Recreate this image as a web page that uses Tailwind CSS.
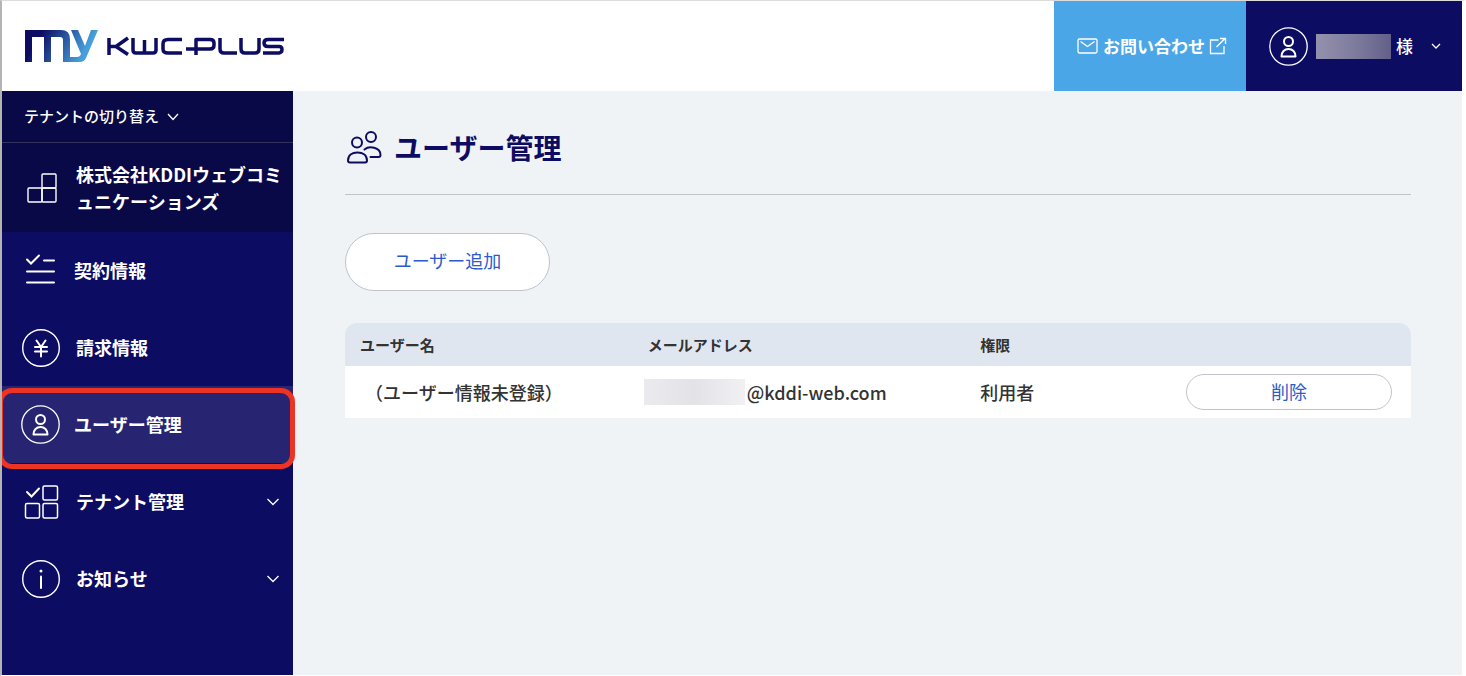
<!DOCTYPE html>
<html lang="ja">
<head>
    <meta charset="UTF-8">
    <meta name="viewport" content="width=device-width, initial-scale=1.0">
    <title>ユーザー管理 | MY KWC-PLUS</title>
    <script src="https://cdn.jsdelivr.net/npm/@tailwindcss/browser@4"></script>
</head>
<body class="min-h-screen flex flex-col bg-[#eff3f6] border-t border-l-2 border-r-4 border-b border-t-[#dcdcdc] border-l-[#b4b4b4] border-r-white border-b-white font-['Noto_Sans_CJK_JP',sans-serif] text-[#333]">
    <header class="flex h-[90px] bg-white">
        <a href="#" class="flex items-center gap-2 pl-[22px]" aria-label="MY KWC-PLUS">
            <svg class="w-[74px] h-[34px]" viewBox="0 0 74 34" fill="none">
                <defs>
                    <linearGradient id="logoGradient" x1="4" y1="0" x2="62" y2="34" gradientUnits="userSpaceOnUse">
                        <stop offset="0.2" stop-color="#0d0c63"/>
                        <stop offset="0.9" stop-color="#46a0dc"/>
                    </linearGradient>
                </defs>
                <path fill="url(#logoGradient)" d="M1 1H37Q46 1 46 10V33H39V11Q39 8 36 8H27V33H20V8H8V33H1ZM47 1H54L61 17L67 1H74L62 29Q60 33 56 33H40V28H53Q56 28 57 25Z"/>
            </svg>
            <svg class="w-[180px] h-[20px]" viewBox="0 0 180 20" fill="none" stroke="#0d0c63" stroke-width="3.500" stroke-linejoin="round">
                <path d="M3 2V19M4 10.500H10L22 2M10 10.500L22 18.500"/>
                <path d="M27 2V14Q27 17 30 17H47Q50 17 50 14V2M38.500 4V17"/>
                <path d="M76 3.500H62Q57 3.500 57 8V13Q57 17 62 17H76"/>
                <path d="M80 13H104Q108 13 108 9V7Q108 3.500 104 3.500H90V19"/>
                <path d="M114 2V13Q114 17 118 17H131"/>
                <path d="M135 2V13Q135 17 139 17H149Q153 17 153 13V2"/>
                <path d="M178 3.500H162Q158 3.500 158 7T162 10.500H173Q176 10.500 176 13.500T173 17H157"/>
            </svg>
        </a>
        <a href="#" class="ml-auto w-48 flex items-center justify-center gap-1 pl-1 bg-[#4ba6e8] text-white text-[17px] font-bold">
            <svg class="w-[22px] h-[18px]" viewBox="0 0 22 18" fill="none" stroke="currentColor" stroke-width="1.300"><rect x="1" y="2" width="19" height="14" rx="1.500"/><path d="M3.500 4.500L10.500 9.500L17.500 4.500"/></svg>
            お問い合わせ
            <svg class="w-[18px] h-[18px]" viewBox="0 0 18 18" fill="none" stroke="currentColor" stroke-width="1.300"><path d="M9.500 3H1.500V16.500H15V9M7.500 10L16 1.500M11 1.500H16.500V7"/></svg>
        </a>
        <button type="button" class="w-[216px] flex items-center pl-[23px] bg-[#0d0c63] text-white text-[17px] font-medium">
            <svg class="w-[39px] h-[39px]" viewBox="0 0 39 39" fill="none" stroke="currentColor"><circle cx="19.500" cy="19.500" r="18.700" stroke-width="1.300"/><g stroke-width="2" stroke-linejoin="round"><circle cx="19.500" cy="14.500" r="4.500"/><path d="M12.500 29.500C12.500 25 15.500 22 19.500 22S26.500 25 26.500 29.500Z"/></g></svg>
            <span class="ml-2 mr-[5px] w-[75px] h-[25px] bg-linear-to-r from-[#9391ac] via-[#7f7d9e] to-[#626089]"></span>
            様
            <svg class="ml-[18px] w-[10px] h-[6px]" viewBox="0 0 10 6" fill="none" stroke="currentColor" stroke-width="1.300"><path d="M1 1L5 5L9 1"/></svg>
        </button>
    </header>

    <div class="flex flex-1">
        <aside class="w-[291px] shrink-0 bg-[#0d0c63] text-white">
            <div class="bg-[#0a0948]">
                <button type="button" class="w-full h-[52px] flex items-center gap-2 px-[22px] text-[15px] font-medium border-b border-[#33325f]">
                    テナントの切り替え
                    <svg class="w-3 h-2" viewBox="0 0 12 8" fill="none" stroke="currentColor" stroke-width="1.300"><path d="M1 1L6 6.500L11 1"/></svg>
                </button>
                <div class="h-[89px] flex items-center gap-4 pl-5 pr-2">
                    <svg class="w-[38px] h-[38px] shrink-0" viewBox="0 0 38 38" fill="none" stroke="currentColor" stroke-width="1.400"><rect x="6" y="19" width="14" height="14" rx="1"/><rect x="20" y="19" width="14" height="14" rx="1"/><rect x="20" y="5" width="14" height="14" rx="1"/></svg>
                    <p class="text-[18px] leading-[27px] font-bold break-all">株式会社KDDIウェブコミュニケーションズ</p>
                </div>
            </div>
            <nav class="text-[18px] font-bold">
                <a href="#" class="h-[77px] flex items-center gap-[14px] pl-5">
                    <svg class="w-[38px] h-[38px]" viewBox="0 0 38 38" fill="none" stroke="currentColor" stroke-width="2" stroke-linecap="round"><path d="M5 7.500L9 11.500L17 3.500M22 8.500H32M5 19.500H32M5 30.500H32"/></svg>
                    契約情報
                </a>
                <a href="#" class="h-[77px] flex items-center gap-4 pl-5">
                    <svg class="w-[38px] h-[38px]" viewBox="0 0 38 38" fill="none" stroke="currentColor"><circle cx="19" cy="19" r="18.300" stroke-width="1.400"/><path d="M14.500 11.500L19 18L23.500 11.500M19 18V27.500M13 18H25M13 22.500H25" stroke-width="2" stroke-linecap="round"/></svg>
                    請求情報
                </a>
                <a href="#" aria-current="page" class="relative h-[77px] flex items-center gap-[14px] pl-[19px] bg-[#272572]">
                    <svg class="w-[39px] h-[39px]" viewBox="0 0 39 39" fill="none" stroke="currentColor"><circle cx="19.500" cy="19.500" r="18.700" stroke-width="1.300"/><g stroke-width="2" stroke-linejoin="round"><circle cx="19.500" cy="14.500" r="4.500"/><path d="M12.500 29.500C12.500 25 15.500 22 19.500 22S26.500 25 26.500 29.500Z"/></g></svg>
                    ユーザー管理
                    <span class="absolute -left-1 -right-0.5 top-0.5 -bottom-1.5 border-5 border-[#ed3424] rounded-[14px]"></span>
                </a>
                <a href="#" class="h-[77px] flex items-center gap-4 pl-5 pr-[14px]">
                    <svg class="w-[38px] h-[38px]" viewBox="0 0 38 38" fill="none" stroke="currentColor" stroke-width="1.500"><rect x="21" y="3" width="14.500" height="14" rx="1.500"/><rect x="3.500" y="20.500" width="14" height="14.500" rx="1.500"/><rect x="21" y="20.500" width="14.500" height="14.500" rx="1.500"/><path d="M5 9L9.500 13.500L17 5.500" stroke-width="2" stroke-linecap="round"/></svg>
                    テナント管理
                    <svg class="ml-auto w-3 h-2" viewBox="0 0 12 8" fill="none" stroke="currentColor" stroke-width="1.300"><path d="M0.500 1L6 6.500L11.500 1"/></svg>
                </a>
                <a href="#" class="h-[77px] flex items-center gap-4 pl-5 pr-[14px]">
                    <svg class="w-[38px] h-[38px]" viewBox="0 0 38 38" fill="none" stroke="currentColor"><circle cx="19" cy="19" r="18.300" stroke-width="1.400"/><path d="M19 16.500V28" stroke-width="2" stroke-linecap="round"/><circle cx="19" cy="11" r="1.500" fill="currentColor" stroke="none"/></svg>
                    お知らせ
                    <svg class="ml-auto w-3 h-2" viewBox="0 0 12 8" fill="none" stroke="currentColor" stroke-width="1.300"><path d="M0.500 1L6 6.500L11.500 1"/></svg>
                </a>
            </nav>
        </aside>

        <main class="flex-1 pt-9 pl-[52px] pr-[51px]">
            <h1 class="flex items-center gap-3 h-[68px] pb-7 mb-[38px] border-b border-[#c0c4c9] text-[28px] font-bold text-[#0d0c63]">
                <svg class="w-[37px] h-[36px]" viewBox="0 0 37 36" fill="none" stroke="currentColor" stroke-width="2" stroke-linejoin="round" stroke-linecap="round"><circle cx="12" cy="13.500" r="5"/><circle cx="26" cy="8" r="5"/><path d="M3 31.500C3 26.500 7 23.500 12.500 23.500S22 26.500 22 31.500Q22 33.500 20 33.500H5Q3 33.500 3 31.500Z"/><path d="M19.500 20.500C24 16.500 35.500 18 35.500 26Q35.500 28 33.500 28H25.500"/></svg>
                ユーザー管理
            </h1>
            <button type="button" class="w-[205px] h-[58px] pb-1 rounded-full border border-[#c0c4c9] bg-white text-[18px] text-[#2b5cc9]">ユーザー追加</button>
            <table class="w-full mt-8 table-fixed text-left">
                <thead class="text-[15px]">
                    <tr class="h-[43px] *:bg-[#e0e6f0]">
                        <th class="w-[27%] pl-[15px] pt-0.5 font-bold rounded-tl-xl">ユーザー名</th>
                        <th class="w-[31%] pl-[15px] pt-0.5 font-bold">メールアドレス</th>
                        <th class="pl-[17px] pt-0.5 font-bold">権限</th>
                        <th class="w-[225px] rounded-tr-xl" aria-label="操作"></th>
                    </tr>
                </thead>
                <tbody class="text-[18px] font-medium">
                    <tr class="h-[52px] bg-white">
                        <td class="pl-5">（ユーザー情報未登録）</td>
                        <td class="pl-[11px]"><div class="flex items-center gap-0.5"><span class="w-[101px] h-[26px] bg-linear-to-r from-[#ebeaee] via-[#e3e2e7] to-[#f1f1f4]"></span>@kddi-web.com</div></td>
                        <td class="pl-[17px]">利用者</td>
                        <td class="pr-[19px]"><button type="button" class="block w-full h-9 pb-0.5 rounded-full border border-[#c0c4c9] bg-white font-normal text-[#2b5cc9]">削除</button></td>
                    </tr>
                </tbody>
            </table>
        </main>
    </div>
</body>
</html>
